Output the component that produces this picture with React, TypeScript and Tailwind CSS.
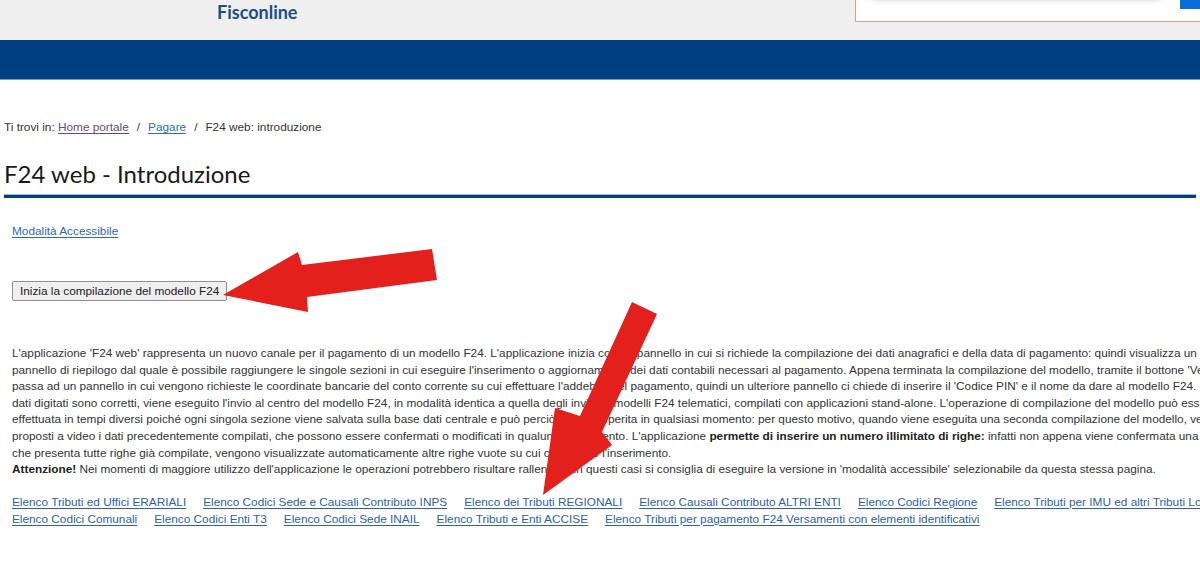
const firstRow = [
  'Elenco Tributi ed Uffici ERARIALI',
  'Elenco Codici Sede e Causali Contributo INPS',
  'Elenco dei Tributi REGIONALI',
  'Elenco Causali Contributo ALTRI ENTI',
  'Elenco Codici Regione',
  'Elenco Tributi per IMU ed altri Tributi Locali',
];

const secondRow = [
  'Elenco Codici Comunali',
  'Elenco Codici Enti T3',
  'Elenco Codici Sede INAIL',
  'Elenco Tributi e Enti ACCISE',
  'Elenco Tributi per pagamento F24 Versamenti con elementi identificativi',
];

function LinkRow({ items }: { items: string[] }) {
  return (
    <div className="flex gap-x-[17px] whitespace-nowrap">
      {items.map((label) => (
        <a key={label} href="#" className="text-[#2d5fab] underline underline-offset-[2px]">
          {label}
        </a>
      ))}
    </div>
  );
}

function Arrows() {
  return (
    <svg className="absolute left-0 top-0 z-10 pointer-events-none" width="1200" height="576" viewBox="0 0 1200 576">
      <polygon
        fill="#e3201b"
        points="223,295 298,252 302,265 432,249 437,280 307,297 308,312"
      />
      <polygon
        fill="#e3201b"
        points="543,495 555,408 580,416 632,302 657,314 602,432 612,445"
      />
    </svg>
  );
}

export default function App() {
  return (
    <div className="relative w-[1200px] h-[576px] overflow-hidden bg-white font-['Liberation_Sans',Arial,sans-serif] text-[#333]">
      {/* header */}
      <header className="relative h-[40px] bg-[#efefef]">
        <div className="pl-[217px] pt-[1px] font-['Lato',sans-serif] font-bold text-[18px] leading-[22px] text-[#1d4c8c]">
          Fisconline
        </div>
        <div className="absolute left-[855px] top-[-10px] w-[400px] h-[32px] bg-white border border-[#e89a7a]">
          <div className="absolute left-[12px] top-[-4px] w-[297px] h-[10px] bg-white rounded-b-[10px] shadow-[0_3px_6px_rgba(0,0,0,0.18)]" />
          <div className="absolute left-[324px] top-[0px] w-[40px] h-[18px] bg-[#0b6fd9]" />
        </div>
      </header>
      <div className="h-[40px] bg-[#003f80] border-b border-[#7d9cc8]" />

      <main className="px-[4px]">
        {/* breadcrumb */}
        <nav className="pt-[39px] text-[11.8px] leading-[16px] whitespace-nowrap">
          <span>Ti trovi in: </span>
          <a href="#" className="text-[#5e4a86] underline underline-offset-[2px]">Home portale</a>
          <span className="mx-[8px]">/</span>
          <a href="#" className="text-[#2e6bc6] underline underline-offset-[2px]">Pagare</a>
          <span className="mx-[8px]">/</span>
          <span>F24 web: introduzione</span>
        </nav>

        <h1 className="mt-[25px] font-['Lato',sans-serif] text-[24px] leading-[28px] text-[#1a1a1a] whitespace-nowrap">
          F24 web - Introduzione
        </h1>
        <div className="mt-[6px] h-px bg-[#9db5d8]" />
        <div className="h-[3px] bg-[#003f80]" />

        <section className="px-[8px]">
          <a href="#" className="block mt-[26px] text-[11.8px] leading-[14px] text-[#2f66b8] underline underline-offset-[2px]">
            Modalità Accessibile
          </a>

          <button className="mt-[43px] h-[20px] px-[7px] bg-[#efefef] border border-[#909090] rounded-[2px] text-[11.8px] leading-[18px] text-[#222]">
            Inizia la compilazione del modello F24
          </button>

          <p className="mt-[43px] text-[11.8px] leading-[16.6px] whitespace-nowrap">
            L'applicazione 'F24 web' rappresenta un nuovo canale per il pagamento di un modello F24. L'applicazione inizia con un pannello in cui si richiede la compilazione dei dati anagrafici e della data di pagamento: quindi visualizza un
            <br />
            pannello di riepilogo dal quale è possibile raggiungere le singole sezioni in cui eseguire l'inserimento o aggiornamento dei dati contabili necessari al pagamento. Appena terminata la compilazione del modello, tramite il bottone 'Verifica e Invia' si
            <br />
            passa ad un pannello in cui vengono richieste le coordinate bancarie del conto corrente su cui effettuare l'addebito del pagamento, quindi un ulteriore pannello ci chiede di inserire il 'Codice PIN' e il nome da dare al modello F24. Se i
            <br />
            dati digitati sono corretti, viene eseguito l'invio al centro del modello F24, in modalità identica a quella degli invii dei modelli F24 telematici, compilati con applicazioni stand-alone. L'operazione di compilazione del modello può essere
            <br />
            effettuata in tempi diversi poiché ogni singola sezione viene salvata sulla base dati centrale e può perciò essere reperita in qualsiasi momento: per questo motivo, quando viene eseguita una seconda compilazione del modello, vengono
            <br />
            proposti a video i dati precedentemente compilati, che possono essere confermati o modificati in qualunque momento. L'applicazione{' '}
            <b className="text-[#222]">permette di inserire un numero illimitato di righe:</b> infatti non appena viene confermata una sezione
            <br />
            che presenta tutte righe già compilate, vengono visualizzate automaticamente altre righe vuote su cui continuare l'inserimento.
            <br />
            <b className="text-[#222]">Attenzione!</b> Nei momenti di maggiore utilizzo dell'applicazione le operazioni potrebbero risultare rallentate: in questi casi si consiglia di eseguire la versione in 'modalità accessibile' selezionabile da questa stessa pagina.
          </p>

          <div className="mt-[16px] text-[11.8px] leading-[17px]">
            <LinkRow items={firstRow} />
            <LinkRow items={secondRow} />
          </div>
        </section>
      </main>

      <Arrows />
    </div>
  );
}
